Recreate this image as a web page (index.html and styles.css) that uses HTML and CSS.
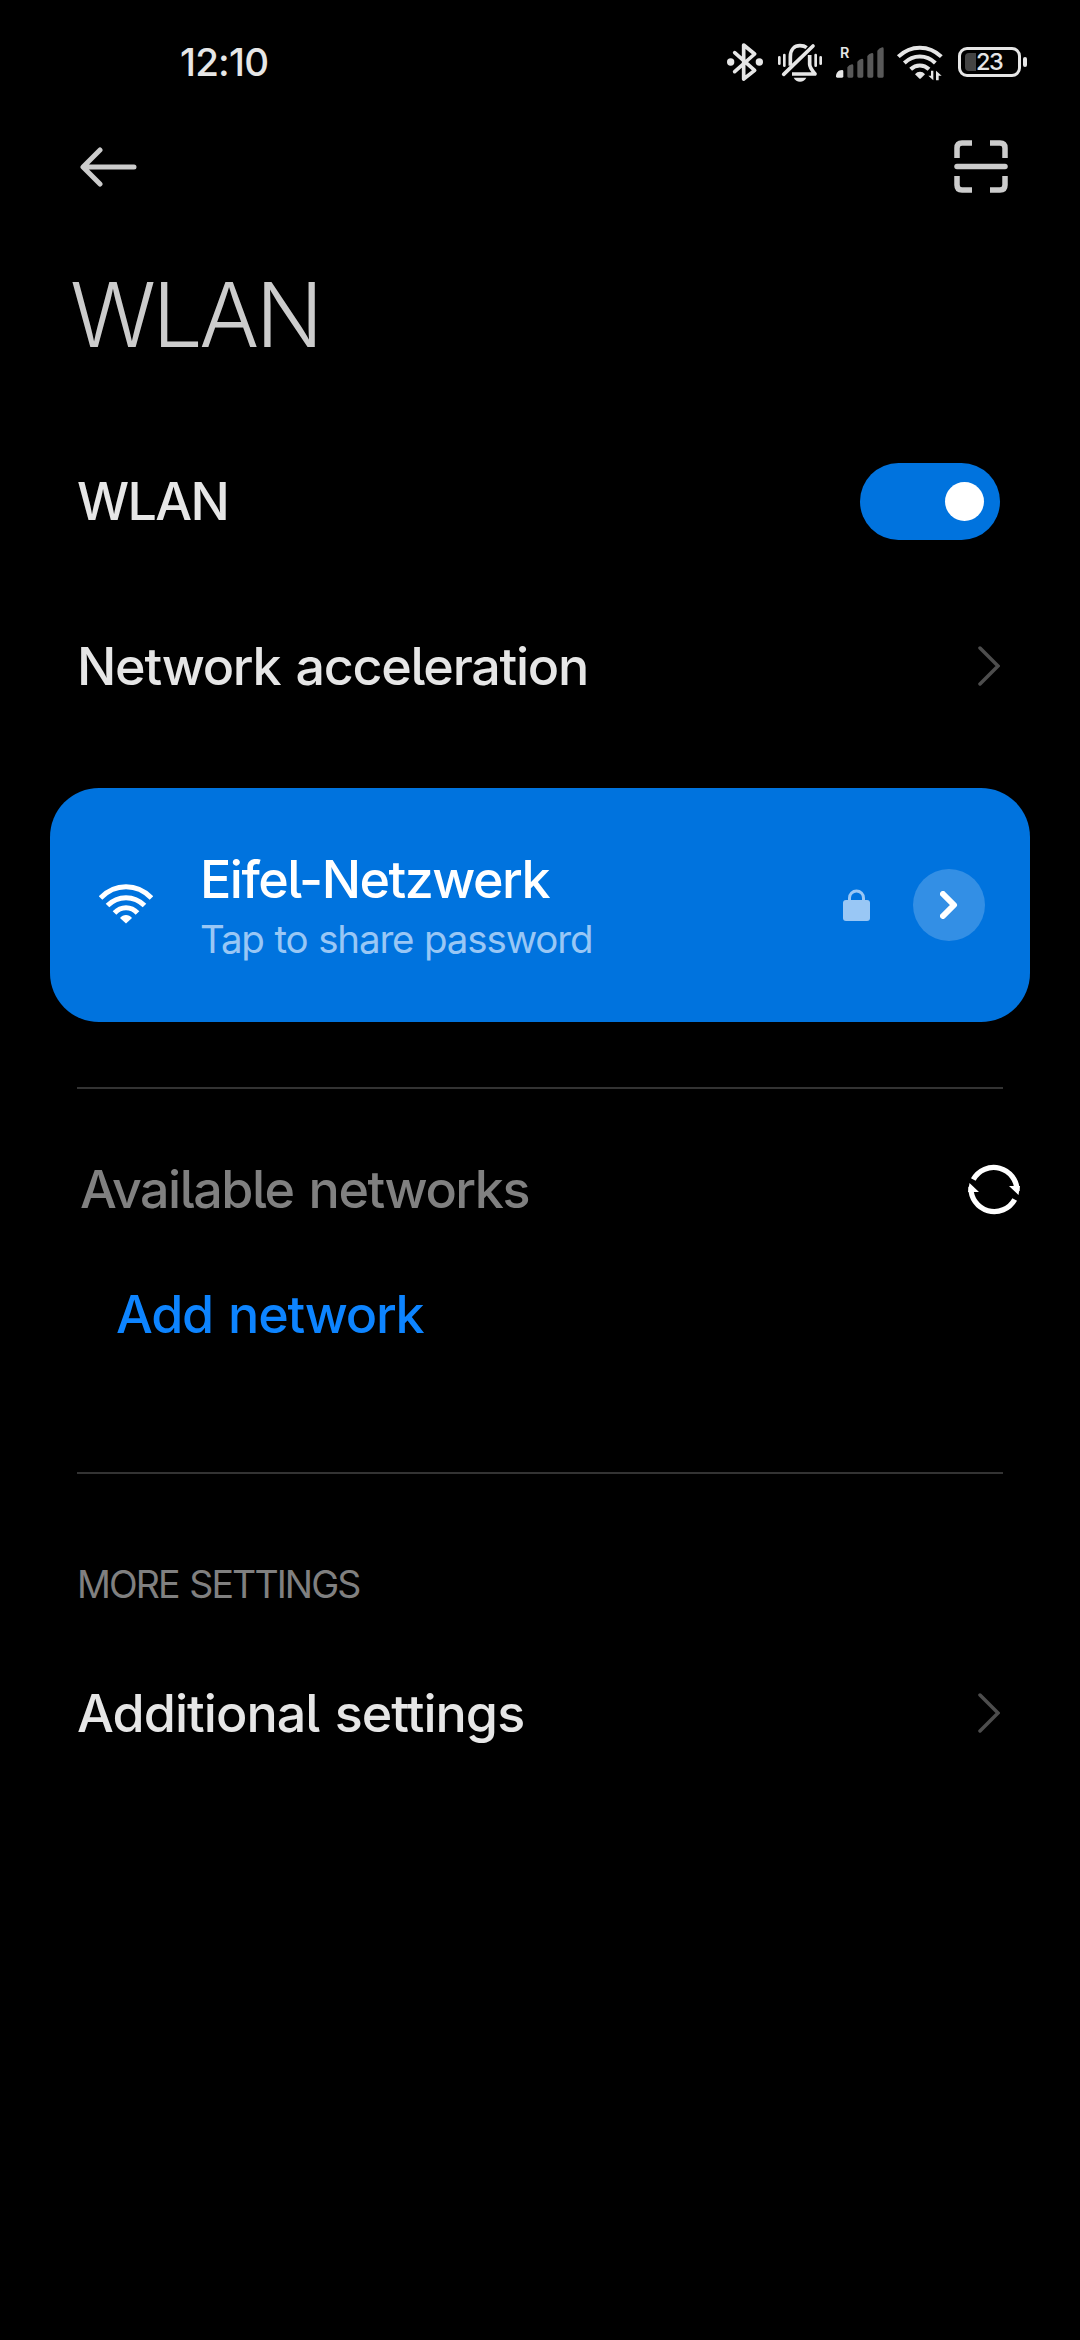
FILE: index.html
```html
<!DOCTYPE html>
<html lang="en">
<head>
<meta charset="utf-8">
<title>WLAN</title>
<link rel="stylesheet" href="styles.css">
</head>
<body>

<div class="statusbar">
    <span class="clock">12:10</span>
    <div class="status-icons">
        <svg class="bluetooth" viewBox="78 30 114 132">
            <path d="M104 68L164 121L131 147V45L164 72L104 125" fill="none" stroke="#e6e6e6" stroke-width="11" stroke-linecap="round" stroke-linejoin="round"/>
            <circle cx="92" cy="96" r="11"/><circle cx="178" cy="96" r="11"/>
        </svg>
        <svg class="muted" viewBox="231 30 138 132">
            <path d="M271 107V80C271 58 284 47 300 47C308 47 315 49 320 53M329 75V103C329 113 336 121 345 132H276" fill="none" stroke="#e6e6e6" stroke-width="11" stroke-linejoin="round"/>
            <path d="M251 133L339 48" fill="none" stroke="#e6e6e6" stroke-width="11" stroke-linecap="round"/>
            <path d="M238 82V101M253 75V107M347 75V107M362 82V101" fill="none" stroke="#e6e6e6" stroke-width="8" stroke-linecap="round"/>
            <path d="M281 143H319C315 151 308 155 300 155S285 151 281 143Z"/>
        </svg>
        <svg class="signal" viewBox="408 30 144 132">
            <path d="M408 139C408 129 415 120 426 120Q430 120 430 124V139Q430 143 426 143H412Q408 143 408 139Z"/>
            <path class="off" d="M442 112Q447 105 456 103Q460 103 460 107V139Q460 143 456 143H446Q442 143 442 139ZM472 95Q477 88 486 86Q490 86 490 90V139Q490 143 486 143H476Q472 143 472 139ZM502 78Q507 71 516 69Q520 69 520 73V139Q520 143 516 143H506Q502 143 502 139ZM532 62Q537 54 547 52Q551 52 551 56V139Q551 143 547 143H536Q532 143 532 139Z"/>
            <text x="420" y="84" font-size="43">R</text>
        </svg>
        <svg class="wifi" viewBox="588 30 141 132">
            <path d="M595 80C632 44 687 44 724 80M613 99C640 73 679 73 706 99M632 118C648 103 671 103 687 118" fill="none" stroke="#e6e6e6" stroke-width="12"/>
            <path d="M645 133C653 123 667 123 675 133L663 145Q660 148 657 145Z"/>
            <path d="M700 122V151L685 137H693V122ZM708 151V122L725 137H716V151Z"/>
        </svg>
        <div class="battery"><span class="level"></span><span class="percent">23</span></div>
    </div>
</div>

<div class="toolbar">
    <svg class="back" viewBox="0 0 58 40"><path d="M20 3L3 20L20 37M4 20H54" fill="none" stroke="#ccc" stroke-width="5" stroke-linecap="round" stroke-linejoin="round"/></svg>
    <svg class="scan" viewBox="0 0 54 53"><path d="M3 18V8Q3 3 8 3H18M36 3H46Q51 3 51 8V18M51 36V45Q51 50 46 50H36M18 50H8Q3 50 3 45V36" fill="none" stroke="#ccc" stroke-width="5.5"/><path d="M3 26.5H51" stroke="#ccc" stroke-width="5.5" stroke-linecap="round"/></svg>
</div>

<h1>WLAN</h1>

<div class="row wlan">
    <span>WLAN</span>
    <div class="toggle"></div>
</div>
<div class="row accel">
    <span>Network acceleration</span>
    <svg class="chevron" viewBox="0 0 22 40"><path d="M2 2L20 20L2 38" fill="none" stroke="#4d4d4d" stroke-width="3.5" stroke-linecap="round"/></svg>
</div>

<div class="card">
    <svg class="net-wifi" viewBox="0 0 54 40"><path d="M1.500 14C16-1 38-1 52.500 14M8.500 21.500C19 11 35 11 45.500 21.500M15.500 29C22 22 32 22 38.500 29" fill="none" stroke="#fff" stroke-width="5"/><path d="M21 34C24 30 30 30 33 34L27 39.500Z" fill="#fff"/></svg>
    <div class="net">
        <div class="ssid">Eifel-Netzwerk</div>
        <div class="hint">Tap to share password</div>
    </div>
    <svg class="lock" viewBox="0 0 27 32"><path d="M6.500 13V9A7 7 0 0 1 20.500 9V13" fill="none" stroke="#99c7f5" stroke-width="3"/><rect y="11" width="27" height="21" rx="3" fill="#99c7f5"/></svg>
    <div class="details"><svg viewBox="0 0 18 28"><path d="M3 3L14 14L3 25" fill="none" stroke="#fff" stroke-width="6" stroke-linecap="round" stroke-linejoin="round"/></svg></div>
</div>

<hr>

<div class="row available">
    <span>Available networks</span>
    <svg class="refresh" viewBox="0 0 52 52">
        <path d="M5.300 16.500A23.300 23.300 0 0 1 49 28M46.700 36.500A23.300 23.300 0 0 1 3 24" fill="none" stroke="#fff" stroke-width="5.300"/>
        <path d="M41 23H52L50.500 32ZM11 29H0L1.500 20Z" fill="#fff"/>
    </svg>
</div>
<div class="row add"><span>Add network</span></div>

<hr class="second">

<div class="category">MORE SETTINGS</div>
<div class="row additional">
    <span>Additional settings</span>
    <svg class="chevron" viewBox="0 0 22 40"><path d="M2 2L20 20L2 38" fill="none" stroke="#4d4d4d" stroke-width="3.5" stroke-linecap="round"/></svg>
</div>

</body>
</html>
```
FILE: styles.css
```css
* {box-sizing:border-box;}
body {margin:0; background:#000; color:#e6e6e6; font:500 52px Inter, "Noto Sans", sans-serif; font-feature-settings:"cv05"; line-height:1.2;}
svg {display:block; flex:none; fill:#e6e6e6;}
span {white-space:nowrap;}

/* status bar */
.statusbar {display:flex; justify-content:space-between; align-items:center; height:124px; padding:0 52px 0 180px;}
.clock {font-size:38.500px; letter-spacing:-0.8px;}
.status-icons {display:flex; align-items:center;}
.status-icons svg {height:44px;}
.status-icons text {font-weight:600;}
.status-icons .off {fill:#595959;}
.bluetooth {width:38px; margin-right:13px;}
.muted {width:46px; margin-right:13px;}
.signal {width:48px; margin-right:12px;}
.wifi {width:47px; margin-right:15px;}
.battery {position:relative; width:63px; height:30px; margin-right:7px; border:3px solid #e6e6e6; border-radius:9px; display:flex; align-items:center; padding-left:4px;}
.battery::after {content:""; position:absolute; right:-9px; top:7px; width:4px; height:10px; border-radius:2px; background:#e6e6e6;}
.level {width:11px; height:18px; border-radius:4px 0 0 4px; background:#444;}
.percent {font-size:23.500px; letter-spacing:-1.5px;}

/* toolbar and title */
.toolbar {display:flex; justify-content:space-between; align-items:center; height:85px; padding:0 72px 0 80px;}
.back {width:58px; height:40px;}
.scan {width:54px; height:53px;}
h1 {margin:0; height:212px; padding:1px 0 0 70px; display:flex; align-items:center; font-size:89px; font-weight:270; letter-spacing:-3.500px; color:#ccc;}

/* settings rows */
.row {display:flex; justify-content:space-between; align-items:center; padding:0 80px 0 77px; letter-spacing:-1.250px; word-spacing:2.500px;}
.row span {padding-top:2px;}
.wlan {height:160px; letter-spacing:-1.600px;}
.accel {height:170px;}
.chevron {width:22px; height:40px;}
.toggle {width:140px; height:77px; border-radius:39px; background:#0073de; padding:19px 16px; display:flex; justify-content:flex-end;}
.toggle::after {content:""; width:39px; height:39px; border-radius:50%; background:#fff;}

/* connected network */
.card {display:flex; align-items:center; height:234px; margin:37px 50px 0; padding:0 45px 0 49px; border-radius:49px; background:#0073de; color:#fff;}
.net-wifi {width:54px; height:40px; margin-bottom:2px;}
.net {flex:1; padding:6px 0 0 47px;}
.ssid {line-height:62px; letter-spacing:-1.500px;}
.hint {font-size:38.500px; font-weight:400; line-height:57px; letter-spacing:-1.150px; word-spacing:1px; color:#99c7f5;}
.lock {width:27px; height:32px; margin-right:43px;}
.details {width:72px; height:72px; border-radius:50%; background:#338fe5; display:flex; align-items:center; justify-content:center;}
.details svg {width:18px; height:28px;}

hr {margin:65px 77px 0; border:0; height:2px; background:#333;}
hr.second {margin-top:98px;}

/* network list */
.available {height:130px; margin-top:35px; padding:0 60px 0 80px; letter-spacing:-1.450px; color:#808080;}
.refresh {width:52px; height:52px;}
.add {height:120px; padding-left:116px; color:#0d84ff;}
.category {height:80px; margin-top:70px; padding:1px 0 0 77px; display:flex; align-items:center; font-size:37.500px; font-weight:400; letter-spacing:-1.900px; word-spacing:2px; color:#808080;}
.additional {height:178px; letter-spacing:-0.950px;}
```
